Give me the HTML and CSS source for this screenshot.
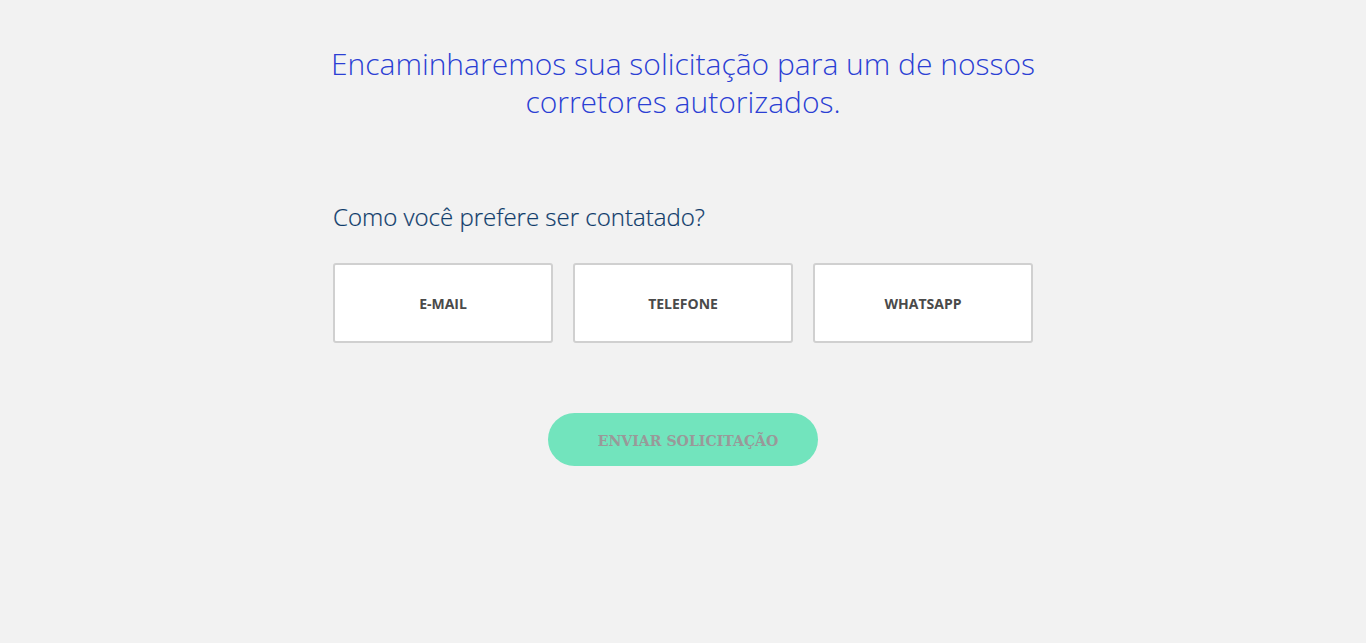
FILE: index.html
```html
<!DOCTYPE html>
<html lang="pt-BR">
<head>
<meta charset="utf-8">
<title>Contato</title>
<link rel="stylesheet" href="styles.css">
</head>
<body>
<main class="page">
  <h1 class="title">Encaminharemos sua solicitação para um de nossos corretores autorizados.</h1>
  <h2 class="question">Como você prefere ser contatado?</h2>
  <div class="options">
    <button class="option" type="button">E-MAIL</button>
    <button class="option" type="button">TELEFONE</button>
    <button class="option" type="button">WHATSAPP</button>
  </div>
  <div class="actions">
    <button class="submit" type="button">ENVIAR SOLICITAÇÃO</button>
  </div>
</main>
</body>
</html>
```

FILE: styles.css
```css
html, body {
  margin: 0;
  padding: 0;
  background: #f2f2f2;
  font-family: "Open Sans", "Liberation Sans", sans-serif;
}
.page {
  width: 700px;
  margin: 0 auto;
  padding-top: 45px;
}
.title {
  margin: 0 -12px;
  font-weight: 300;
  font-size: 30px;
  line-height: 38px;
  color: #2b3fd4;
  text-align: center;
}
.question {
  margin: 80px 0 0;
  font-weight: 300;
  font-size: 24px;
  line-height: 32px;
  color: #0f3c6b;
  -webkit-text-stroke: 0.2px #0f3c6b;
}
.options {
  display: grid;
  grid-template-columns: repeat(3, 220px);
  gap: 20px;
  margin-top: 30px;
}
.option {
  height: 80px;
  background: #fff;
  border: 2px solid #d0d0d0;
  border-radius: 3px;
  font-family: "Open Sans", sans-serif;
  font-weight: 700;
  font-size: 14px;
  color: #4a4a4a;
  cursor: pointer;
}
.actions {
  display: flex;
  justify-content: center;
  margin-top: 70px;
}
.submit {
  width: 270px;
  height: 53px;
  border: 0;
  border-radius: 27px;
  background: #72e4bd;
  color: #999999;
  font-family: "DejaVu Serif Condensed", "DejaVu Serif", serif;
  font-weight: 700;
  font-size: 15.7px;
  padding: 2px 0 0 10px;
}
```
